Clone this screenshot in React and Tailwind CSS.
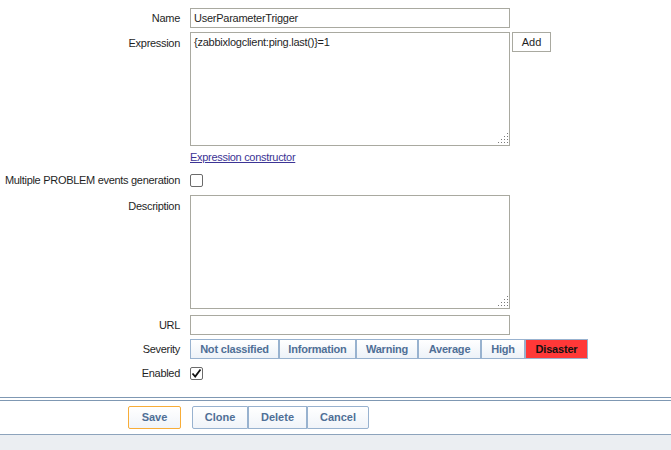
import React from "react";

const font = { fontFamily: '"Liberation Sans", Arial, sans-serif' };

function Label({ children, top = false }) {
  return (
    <div className={`w-[180px] shrink-0 text-right text-[11px] tracking-[-0.3px] text-[#1f1f1f] ${top ? "pt-[3px]" : ""}`}>
      {children}
    </div>
  );
}

function Checkbox({ checked }) {
  return (
    <div className="w-[13px] h-[13px] border border-[#6b6b6b] rounded-[2px] bg-white flex items-center justify-center">
      {checked && (
        <svg width="11" height="11" viewBox="0 0 11 11">
          <path d="M1.5 5.5 L4.2 8.5 L9.5 1.5" fill="none" stroke="#111" strokeWidth="1.8" />
        </svg>
      )}
    </div>
  );
}

function Grip() {
  const dots = [];
  for (let r = 0; r < 4; r++) {
    for (let c = 3 - r; c < 4; c++) {
      dots.push(<rect key={`${r}-${c}`} x={c * 3} y={r * 3} width="1" height="1" fill="#7a7a7a" />);
    }
  }
  return (
    <svg className="absolute right-[2px] bottom-[3px]" width="10" height="10" viewBox="0 0 10 10">
      {dots}
    </svg>
  );
}

function Area({ value }) {
  return (
    <div className="relative w-[320px] h-[114px]">
      <textarea
        readOnly
        defaultValue={value}
        className="w-[320px] h-[114px] resize-none border border-[#a9a9a0] px-[3px] py-[3px] text-[11px] tracking-[-0.25px] leading-[13px] text-[#1f1f1f] outline-none block"
        style={font}
      />
      <Grip />
    </div>
  );
}

const sev = [
  ["Not classified", "w-[89px]"],
  ["Information", "w-[77px]"],
  ["Warning", "w-[62px]"],
  ["Average", "w-[63px]"],
  ["High", "w-[44px]"],
];

export default function App() {
  return (
    <div className="w-[671px] h-[450px] bg-white flex flex-col overflow-hidden" style={font}>
      <div className="flex flex-col pt-[8px]">
        {/* Name */}
        <div className="flex items-center gap-[10px] h-[20px]">
          <Label>Name</Label>
          <div className="w-[320px] h-[20px] border border-[#a9a9a0] px-[3px] text-[11px] tracking-[-0.25px] leading-[18px] text-[#1f1f1f]">
            UserParameterTrigger
          </div>
        </div>
        {/* Expression */}
        <div className="flex items-start gap-[10px] mt-[4px]">
          <Label top>Expression</Label>
          <Area value="{zabbixlogclient:ping.last()}=1" />
          <div className="-ml-[8px] w-[39px] h-[20px] border border-[#a9a9a0] bg-white text-[11px] text-[#1f1f1f] flex items-center justify-center">
            Add
          </div>
        </div>
        {/* Expression constructor link */}
        <div className="flex gap-[10px] mt-[5px] h-[12px]">
          <div className="w-[180px]" />
          <span className="text-[11px] tracking-[-0.3px] leading-[12px] text-[#3c3495] underline">Expression constructor</span>
        </div>
        {/* Multiple */}
        <div className="flex items-center gap-[10px] mt-[11px] h-[13px]">
          <Label>Multiple PROBLEM events generation</Label>
          <Checkbox />
        </div>
        {/* Description */}
        <div className="flex items-start gap-[10px] mt-[8px]">
          <Label top>Description</Label>
          <Area value="" />
        </div>
        {/* URL */}
        <div className="flex items-center gap-[10px] mt-[6px] h-[20px]">
          <Label>URL</Label>
          <div className="w-[320px] h-[20px] border border-[#a9a9a0]" />
        </div>
        {/* Severity */}
        <div className="flex items-center gap-[10px] mt-[4px] h-[20px]">
          <Label>Severity</Label>
          <div className="flex h-[20px]">
            {sev.map(([t, w]) => (
              <div
                key={t}
                className={`${w} h-[20px] border border-[#98b2cf] bg-gradient-to-b from-[#ffffff] to-[#edf2f8] text-[11px] font-bold text-[#4f6f96] flex items-center justify-center tracking-[-0.2px]`}
              >
                {t}
              </div>
            ))}
            <div className="w-[63px] h-[20px] border border-[#98b2cf] bg-[#ff3838] text-[11px] font-bold text-[#111] flex items-center justify-center tracking-[-0.2px]">
              Disaster
            </div>
          </div>
        </div>
        {/* Enabled */}
        <div className="flex items-center gap-[10px] mt-[8px] h-[13px]">
          <Label>Enabled</Label>
          <Checkbox checked />
        </div>
      </div>
      {/* footer */}
      <div className="mt-[17px] border-t border-[#7f98b3] h-[3px]" />
      <div className="border-t border-[#7f98b3] flex items-center h-[34px] pl-[128px]">
        <div className="w-[53px] h-[23px] border border-[#f8ad38] rounded-[2px] bg-gradient-to-b from-white to-[#f0f4f9] text-[11px] font-bold text-[#4f6f96] flex items-center justify-center">
          Save
        </div>
        <div className="ml-[11px] flex">
          {[
            ["Clone", "w-[56px]"],
            ["Delete", "w-[59px]"],
            ["Cancel", "w-[62px]"],
          ].map(([t, w], i) => (
            <div
              key={t}
              className={`${w} h-[23px] border border-[#98b2cf] ${i === 0 ? "rounded-l-[2px]" : ""} ${i === 2 ? "rounded-r-[2px]" : ""} bg-gradient-to-b from-white to-[#f0f4f9] text-[11px] font-bold text-[#4f6f96] flex items-center justify-center`}
            >
              {t}
            </div>
          ))}
        </div>
      </div>
      <div className="border-t border-[#8da3bc] flex-1 bg-[#ebeef2]" />
    </div>
  );
}
